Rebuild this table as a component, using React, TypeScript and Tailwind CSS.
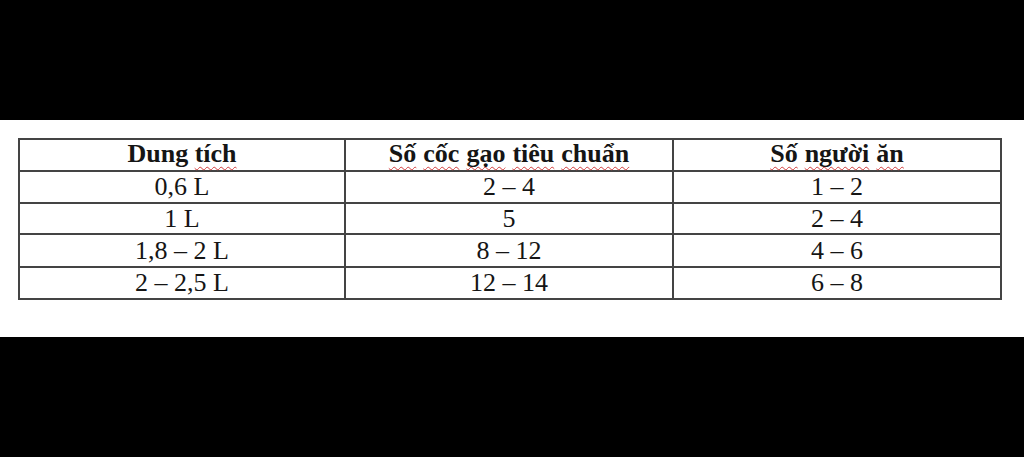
import React from "react";

const W = ({ children }: { children: React.ReactNode }) => (
  <span className="underline decoration-wavy decoration-[#d23c3c] decoration-1 underline-offset-[4px] [text-decoration-skip-ink:none]">
    {children}
  </span>
);

const rows: [string, string, string][] = [
  ["0,6 L", "2 – 4", "1 – 2"],
  ["1 L", "5", "2 – 4"],
  ["1,8 – 2 L", "8 – 12", "4 – 6"],
  ["2 – 2,5 L", "12 – 14", "6 – 8"],
];

const heights = ["h-[32px]", "h-[31px]", "h-[33px]", "h-[30px]"];

export default function App() {
  return (
    <div className="w-[1024px] h-[457px] bg-black flex flex-col" style={{ fontFamily: '"Liberation Serif", "Times New Roman", serif' }}>
      <div className="h-[120px] bg-black" />
      <div className="h-[217px] bg-white px-[18px] pt-[18px]">
        <div className="w-[984px] border-2 border-[#444] text-[#151515] text-[26px] leading-none">
          <div className="grid grid-cols-[326px_328px_1fr] h-[32px] border-b-2 border-[#444] font-bold">
            <div className="flex items-center justify-center border-r-2 border-[#444] pb-[2px]">
              <span>Dung <W>tích</W></span>
            </div>
            <div className="flex items-center justify-center border-r-2 border-[#444] pb-[2px]">
              <span className="flex gap-[7px]">
                <W>Số</W> <W>cốc</W> <W>gạo</W> <W>tiêu</W> <W>chuẩn</W>
              </span>
            </div>
            <div className="flex items-center justify-center pb-[2px]">
              <span className="flex gap-[7px]">
                <W>Số</W> <W>người</W> <W>ăn</W>
              </span>
            </div>
          </div>
          {rows.map((r, i) => (
            <div
              key={i}
              className={`grid grid-cols-[326px_328px_1fr] ${heights[i]} ${i < rows.length - 1 ? "border-b-2 border-[#444]" : ""}`}
            >
              <div className="flex items-center justify-center border-r-2 border-[#444]">{r[0]}</div>
              <div className="flex items-center justify-center border-r-2 border-[#444]">{r[1]}</div>
              <div className="flex items-center justify-center">{r[2]}</div>
            </div>
          ))}
        </div>
      </div>
      <div className="flex-1 bg-black" />
    </div>
  );
}
